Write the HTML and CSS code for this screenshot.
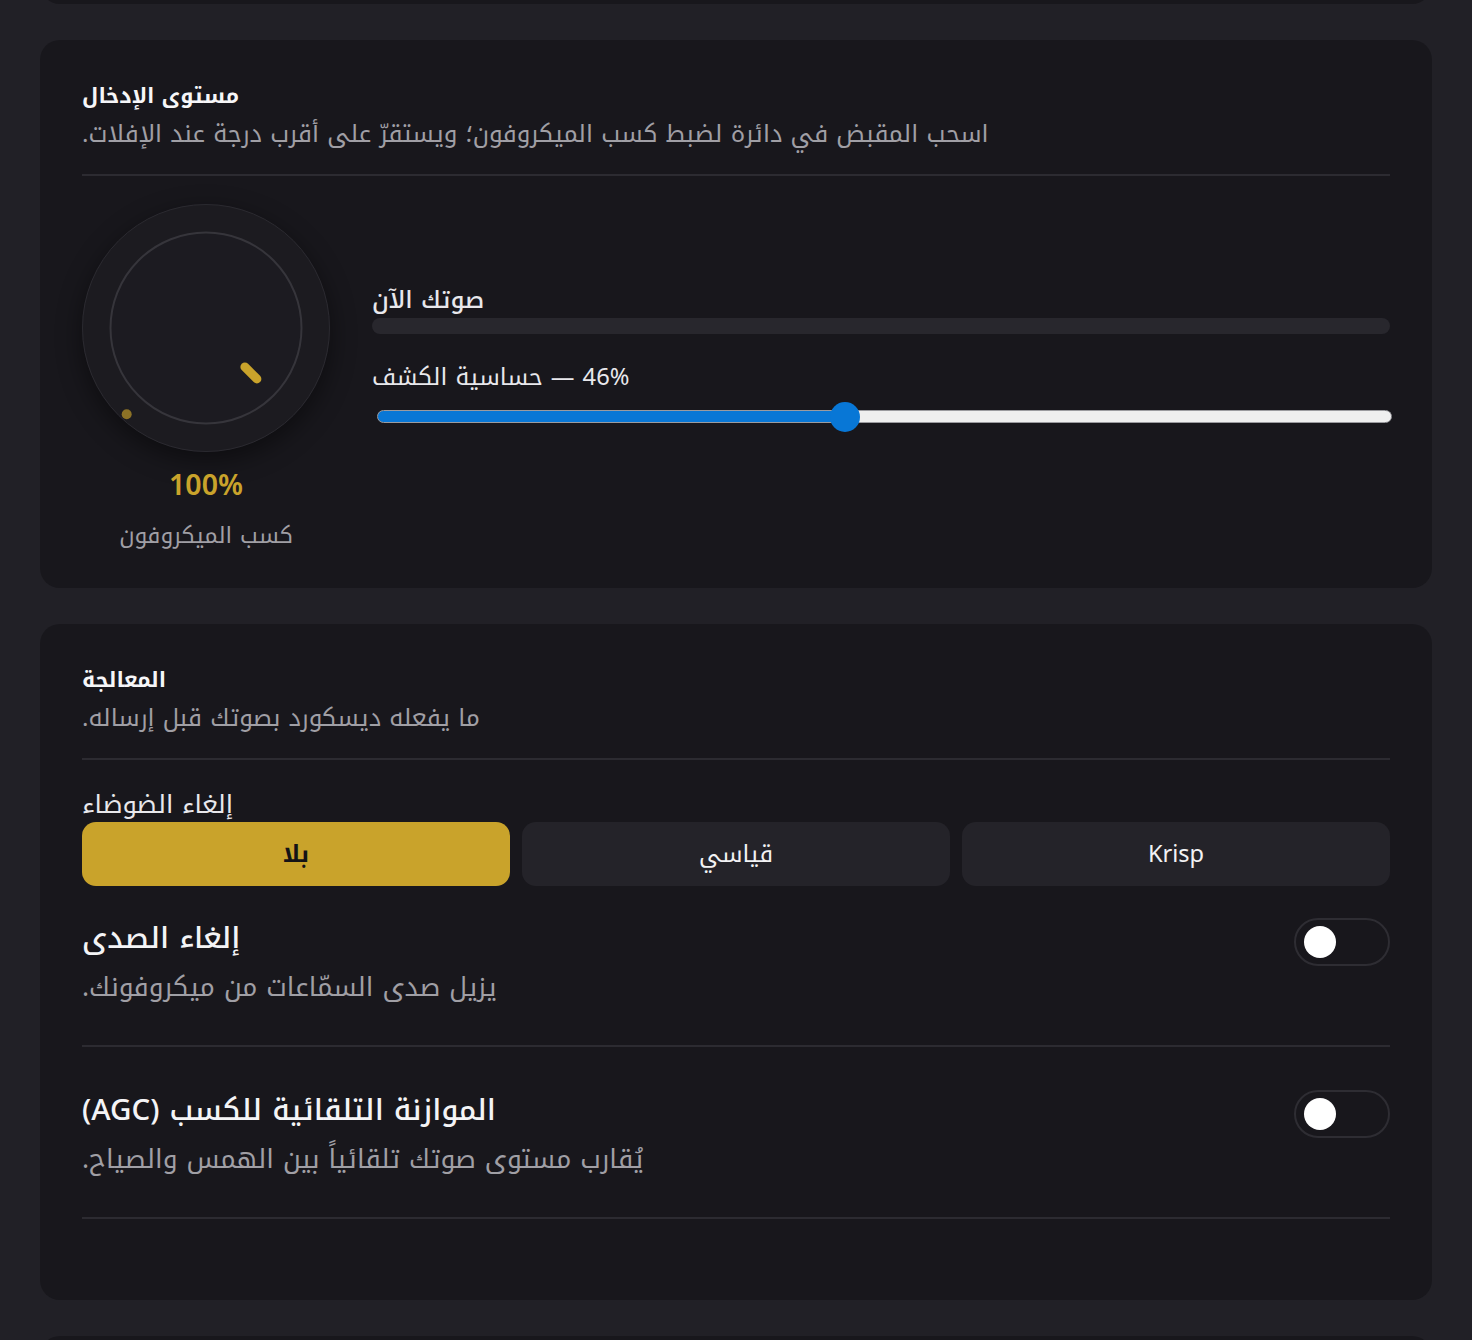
FILE: index.html
```html
<!DOCTYPE html>
<html lang="ar">
<head>
<meta charset="utf-8">
<title>إعدادات الصوت</title>
<link rel="stylesheet" href="styles.css">
</head>
<body>
<main class="page">
  <section class="card stub" aria-hidden="true"></section>

  <section class="card">
    <header class="card-head">
      <h2 class="card-title" dir="rtl">مستوى الإدخال</h2>
      <p class="card-desc" dir="rtl">اسحب المقبض في دائرة لضبط كسب الميكروفون؛ ويستقرّ على أقرب درجة عند الإفلات.</p>
    </header>
    <div class="input-body">
      <div class="knob-col">
        <div class="knob" role="slider" aria-valuenow="100" aria-label="كسب الميكروفون">
          <svg viewBox="0 0 248 248" width="248" height="248">
            <circle cx="124" cy="124" r="123.5" fill="#1c1b20" stroke="#2b2a30" stroke-width="1"/>
            <circle cx="124" cy="124" r="95.5" fill="#1c1b21" stroke="#36353b" stroke-width="2"/>
            <line x1="162.9" y1="162.9" x2="174.9" y2="174.9" stroke="#c9a32b" stroke-width="9" stroke-linecap="round"/>
            <circle cx="44.7" cy="210.3" r="5" fill="#8c7226"/>
          </svg>
        </div>
        <div class="knob-value">100%</div>
        <div class="knob-caption" dir="rtl">كسب الميكروفون</div>
      </div>
      <div class="meters">
        <div class="meter-label now" dir="rtl">صوتك الآن</div>
        <div class="meter-bar"></div>
        <label class="meter-label sens" for="sens"><bdi>حساسية الكشف</bdi> — 46%</label>
        <input id="sens" class="range" type="range" min="0" max="100" value="46" style="--v:0.46">
      </div>
    </div>
  </section>

  <section class="card proc">
    <header class="card-head">
      <h2 class="card-title" dir="rtl">المعالجة</h2>
      <p class="card-desc" dir="rtl">ما يفعله ديسكورد بصوتك قبل إرساله.</p>
    </header>
    <div class="field-label" dir="rtl">إلغاء الضوضاء</div>
    <div class="segmented" role="radiogroup">
      <button class="seg active" dir="rtl">بلا</button>
      <button class="seg" dir="rtl">قياسي</button>
      <button class="seg">Krisp</button>
    </div>
    <div class="row first">
      <div class="row-text">
        <div class="row-title" dir="rtl">إلغاء الصدى</div>
        <div class="row-desc" dir="rtl">يزيل صدى السمّاعات من ميكروفونك.</div>
      </div>
      <button class="toggle" role="switch" aria-checked="false"><span class="toggle-knob"></span></button>
    </div>
    <div class="row">
      <div class="row-text">
        <div class="row-title" dir="rtl">الموازنة التلقائية للكسب (AGC)</div>
        <div class="row-desc" dir="rtl">يُقارب مستوى صوتك تلقائياً بين الهمس والصياح.</div>
      </div>
      <button class="toggle" role="switch" aria-checked="false"><span class="toggle-knob"></span></button>
    </div>
  </section>

  <section class="card stub-bottom" aria-hidden="true"></section>
</main>
</body>
</html>
```

FILE: styles.css
```css
html, body {
  margin: 0;
  padding: 0;
}
body {
  background: #212026;
  color: #f2f2f4;
  font-family: "Noto Kufi Arabic", "Noto Sans", sans-serif;
  height: 1340px;
  overflow: hidden;
}
.page {
  display: flex;
  flex-direction: column;
  gap: 36px;
  padding: 0 40px;
}
.card {
  background: #18171c;
  border-radius: 20px;
  padding: 42px 42px 39px;
}
.stub {
  height: 40px;
  padding: 0;
  margin-top: -36px;
}
.stub-bottom {
  height: 60px;
  padding: 0;
}
.card-head {
  padding-bottom: 23px;
  border-bottom: 2px solid #2c2b31;
}
.card-title {
  margin: 0;
  font-size: 21.2px;
  line-height: 28px;
  font-weight: 700;
  text-align: left;
  color: #f6f6f8;
}
.card-desc {
  margin: 8px 0 0;
  font-size: 24.25px;
  line-height: 33px;
  color: #a09fa5;
  text-align: left;
}

/* input level */
.input-body {
  display: flex;
  gap: 42px;
  padding-top: 28px;
}
.knob-col {
  width: 248px;
  flex: none;
  display: flex;
  flex-direction: column;
  align-items: center;
}
.knob {
  width: 248px;
  height: 248px;
  border-radius: 50%;
  box-shadow: 0 8px 26px rgba(0, 0, 0, 0.45);
}
.knob svg {
  display: block;
}
.knob-value {
  margin-top: 17px;
  font-size: 28.5px;
  line-height: 34px;
  font-weight: 600;
  color: #c9a32b;
}
.knob-caption {
  margin-top: 20px;
  font-size: 22.8px;
  line-height: 26px;
  color: #a09fa5;
}
.meters {
  flex: 1;
  display: flex;
  flex-direction: column;
  padding-top: 80px;
}
.meter-label {
  line-height: 33px;
  color: #e8e8ec;
  text-align: left;
}
.now {
  font-size: 24px;
  font-weight: 500;
}
.meter-bar {
  height: 16px;
  border-radius: 8px;
  background: #28272d;
  margin-top: 1px;
}
.sens {
  display: block;
  margin-top: 27px;
  font-size: 23.7px;
}
.range {
  -webkit-appearance: none;
  appearance: none;
  display: block;
  width: calc(100% - 3px);
  height: 30px;
  margin: 7px 0 0 5px;
  padding: 0;
  background: transparent;
}
.range::-webkit-slider-runnable-track {
  height: 13px;
  border: 1px solid #9b9b9f;
  border-radius: 8px;
  background: linear-gradient(to right, #0877d6 0, #0877d6 calc(15px + (100% - 30px) * var(--v)), #efefef calc(15px + (100% - 30px) * var(--v)), #efefef 100%);
}
.range::-webkit-slider-thumb {
  -webkit-appearance: none;
  appearance: none;
  width: 30px;
  height: 30px;
  border: none;
  border-radius: 50%;
  background: #0877d6;
  margin-top: -8.5px;
}

/* processing */
.proc {
  padding-bottom: 81px;
}
.field-label {
  margin-top: 30px;
  font-size: 25.5px;
  font-weight: 450;
  line-height: 30px;
  color: #e8e8ec;
  text-align: left;
}
.segmented {
  display: grid;
  grid-template-columns: repeat(3, 1fr);
  gap: 12px;
  margin-top: 2px;
}
.seg {
  height: 64px;
  border: none;
  border-radius: 14px;
  background: #242329;
  color: #f2f2f4;
  font-family: inherit;
  font-size: 23.6px;
}
.seg.active {
  background: #c9a32b;
  color: #141316;
  font-weight: 700;
}
.row {
  display: flex;
  justify-content: space-between;
  align-items: flex-start;
  padding: 43px 0 41.5px;
  border-bottom: 2px solid #2c2b31;
}
.row.first {
  padding-top: 32px;
}
.row-text {
  text-align: left;
}
.row-title {
  font-size: 29.5px;
  font-weight: 520;
  line-height: 40px;
  color: #f4f4f6;
}
.row-desc {
  margin-top: 11.5px;
  font-size: 26.4px;
  line-height: 34px;
  color: #a09fa5;
}
.toggle {
  width: 96px;
  height: 48px;
  flex: none;
  display: flex;
  align-items: center;
  padding: 0 8px;
  border: 2px solid #2e2d33;
  border-radius: 24px;
  background: transparent;
}
.toggle-knob {
  width: 32px;
  height: 32px;
  border-radius: 50%;
  background: #ffffff;
}
```
